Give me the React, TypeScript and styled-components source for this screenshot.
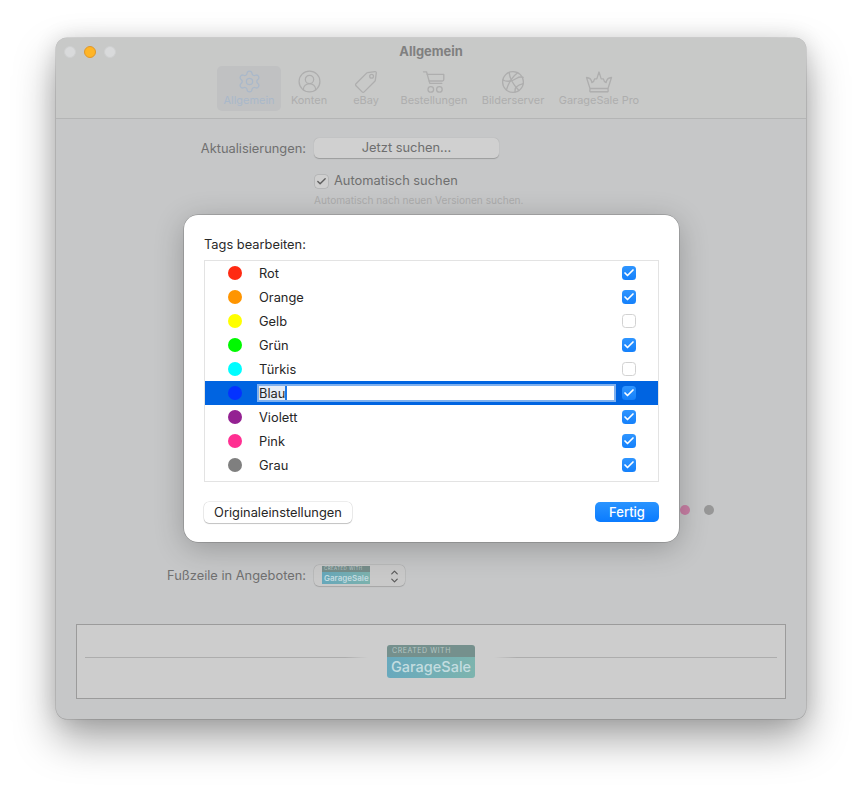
import React from "react";
import styled, { createGlobalStyle } from "styled-components";
import { Check, ChevronDown, ChevronUp, CircleUserRound, Settings } from "lucide-react";

const SYSTEM_FONT = `Inter, "Liberation Sans", sans-serif`;

const GlobalStyle = createGlobalStyle`
  html, body {
    margin: 0;
    padding: 0;
    background: #ffffff;
    font-family: ${SYSTEM_FONT};
    -webkit-font-smoothing: antialiased;
  }
`;

const tags = [
  { name: "Rot", color: "#ff2a12", checked: true },
  { name: "Orange", color: "#ff9500", checked: true },
  { name: "Gelb", color: "#ffff00", checked: false },
  { name: "Grün", color: "#00f900", checked: true },
  { name: "Türkis", color: "#00fdff", checked: false },
  { name: "Blau", color: "#0432ff", checked: true, editing: true },
  { name: "Violett", color: "#942192", checked: true },
  { name: "Pink", color: "#ff2f92", checked: true },
  { name: "Grau", color: "#7f7f7f", checked: true },
];

const TagIcon = () => (
  <svg width="24" height="24" viewBox="0 0 24 24" fill="none" stroke="currentColor" strokeWidth="1.3" strokeLinejoin="round">
    <path d="M13.6 2.6 21 1.6c.8-.1 1.4.5 1.3 1.3l-1 7.4c0 .4-.2.7-.5 1L10.2 21.9c-.6.6-1.5.6-2.1 0L2 15.8c-.6-.6-.6-1.5 0-2.1L12.6 3.1c.3-.3.6-.5 1-.5Z" />
    <circle cx="17.6" cy="6.2" r="1.9" />
  </svg>
);

const CartIcon = () => (
  <svg width="24" height="24" viewBox="0 0 24 24" fill="none" stroke="currentColor" strokeWidth="1.3" strokeLinecap="round" strokeLinejoin="round">
    <path d="M1.500 1.800h3l3.300 11.600h12" />
    <path d="M5.200 4.300h16.600v5.200c0 .9-.6 1.500-1.500 1.500H7.200" />
    <circle cx="8.800" cy="19.400" r="2.800" />
    <circle cx="17.400" cy="19.400" r="2.800" />
  </svg>
);

const GlobeBallIcon = () => (
  <svg width="24" height="24" viewBox="0 0 24 24" fill="none" stroke="currentColor" strokeWidth="1.3" strokeLinecap="round">
    <circle cx="12" cy="12" r="10.400" />
    <path d="M16.600 2.700C12.400 6 8 11 5.400 20" />
    <path d="M8.200 2.300c.2 5.600 4.200 12.500 9.700 18.200" />
    <path d="M1.800 10c4.500 2.200 9 1.600 14-1.800 2-1.300 4-1.600 6.400-.8" />
    <path d="M14 22c-.6-3 .8-6.500 8.200-8.400" />
  </svg>
);

const CrownIcon = () => (
  <svg width="28" height="24" viewBox="0 0 28 24" fill="none" stroke="currentColor" strokeWidth="1.300" strokeLinejoin="round">
    <path d="M5 18.500 1.500 7.500c3 .2 5 2 5.400 5.200 1.400-.5 2.300-1.700 2.700-3.800h2.200L14 2l2.200 6.900h2.200c.4 2.100 1.300 3.300 2.700 3.800.4-3.200 2.400-5 5.400-5.200L23 18.500Z" />
    <path d="M4.800 21.800h18.400" strokeWidth="1.500" />
    <path d="M5 18.500 4.800 21.800M23 18.500l.2 3.300" />
  </svg>
);

const Page = styled.div`
  width: 862px;
  height: 793px;
  padding: 38px 56px 74px;
  box-sizing: border-box;
  overflow: hidden;
`;

const Window = styled.div`
  position: relative;
  height: 681px;
  display: flex;
  flex-direction: column;
  border-radius: 11px;
  background: #c6c7c8;
  box-shadow: 0 0 0 0.5px rgba(0, 0, 0, 0.2), 0 20px 42px rgba(0, 0, 0, 0.36), 0 0 22px rgba(0, 0, 0, 0.12);
`;

const TitleBar = styled.header`
  height: 81px;
  flex: none;
  box-sizing: border-box;
  display: flex;
  flex-direction: column;
  border-bottom: 1px solid #b4b5b5;
  border-radius: 11px 11px 0 0;
  background: #c8c9c8;
`;

const TitleRow = styled.div`
  position: relative;
  height: 28px;
  flex: none;
  display: flex;
  align-items: flex-start;
  justify-content: center;
`;

const Lights = styled.div`
  position: absolute;
  left: 8px;
  top: 8px;
  display: flex;
  gap: 8px;
`;

const Light = styled.span<{ $active?: boolean }>`
  width: 12px;
  height: 12px;
  border-radius: 50%;
  box-sizing: border-box;
  background: ${(p) => (p.$active ? "#ffb527" : "#d9dadb")};
  border: 0.5px solid ${(p) => (p.$active ? "#e0982a" : "#cfd0d1")};
`;

const Title = styled.h1`
  margin: 6px 0 0;
  font-size: 12.900px;
  line-height: 16px;
  font-weight: 700;
  color: #808080;
`;

const Toolbar = styled.nav`
  display: flex;
  justify-content: center;
`;

const ToolItem = styled.div<{ $width: number; $selected?: boolean }>`
  width: ${(p) => p.$width}px;
  height: 45px;
  display: flex;
  flex-direction: column;
  align-items: center;
  justify-content: flex-start;
  padding-top: 3px;
  box-sizing: border-box;
  border-radius: 5px;
  background: ${(p) => (p.$selected ? "#c0c1c2" : "transparent")};
  color: ${(p) => (p.$selected ? "#a9b8ca" : "#aeaeae")};
`;

const ToolIcon = styled.div`
  height: 25px;
  display: flex;
  align-items: center;
  justify-content: center;
  color: inherit;
`;

const ToolLabel = styled.span`
  margin-top: 0;
  font-size: 10.950px;
  line-height: 13px;
  white-space: nowrap;
`;

const Content = styled.main`
  flex: 1;
  display: flex;
  flex-direction: column;
  padding: 19px 20px 20px;
  min-height: 0;
`;

const FormRow = styled.div`
  display: grid;
  grid-template-columns: 230px 1fr;
  column-gap: 8px;
  align-items: center;
`;

const FormLabel = styled.label`
  justify-self: end;
  font-size: 12.850px;
  color: #707070;
  white-space: nowrap;
`;

const PushButton = styled.div`
  width: 185px;
  height: 20px;
  border-radius: 5px;
  background: #d0d0d0;
  box-shadow: 0 0.5px 1px rgba(0, 0, 0, 0.22);
  font-size: 12.850px;
  line-height: 19px;
  text-align: center;
  color: #6e6e6e;
`;

const CheckRow = styled.div`
  grid-column: 2;
  display: flex;
  align-items: center;
  gap: 6px;
  margin-top: 14px;
  padding-left: 1px;
  font-size: 12.850px;
  line-height: 18px;
  color: #6f6f6f;
`;

const DimBox = styled.span`
  width: 13px;
  height: 13px;
  border-radius: 3px;
  background: #cfcfcf;
  box-shadow: 0 0 0 0.5px rgba(0, 0, 0, 0.16);
  display: flex;
  align-items: center;
  justify-content: center;
  color: #5e5e5e;
`;

const Hint = styled.div`
  grid-column: 2;
  margin-top: 3px;
  font-size: 10.100px;
  line-height: 14px;
  color: #acacac;
`;

const DotRow = styled.div`
  margin-top: 298px;
  margin-right: 72px;
  display: flex;
  justify-content: flex-end;
  gap: 14px;
`;

const Dot = styled.span<{ $color: string }>`
  width: 10px;
  height: 10px;
  border-radius: 50%;
  background: ${(p) => p.$color};
`;

const FooterRow = styled(FormRow)`
  margin-top: 50px;
`;

const PopupButton = styled.div`
  width: 91px;
  height: 21px;
  box-sizing: border-box;
  padding: 1px 5px 0 8px;
  border-radius: 5px;
  background: #c9c9c9;
  box-shadow: 0 0 0 0.5px rgba(0, 0, 0, 0.1), 0 0.5px 1px rgba(0, 0, 0, 0.12);
  display: flex;
  align-items: flex-start;
  justify-content: space-between;
  color: #5a5a5a;
`;

const Stepper = styled.span`
  display: flex;
  flex-direction: column;
  margin-top: 2px;
  svg {
    display: block;
    margin: -1.500px 0;
  }
`;

const MiniLogo = styled.div`
  width: 48px;
  height: 18px;
  display: flex;
  flex-direction: column;
  font-size: 4.500px;
  color: #bdcaca;
`;

const MiniTop = styled.span`
  height: 6px;
  line-height: 6px;
  padding-left: 2px;
  background: #768d8a;
  letter-spacing: 0.4px;
  white-space: nowrap;
`;

const MiniBottom = styled.span`
  flex: 1;
  padding-left: 2px;
  font-size: 8px;
  line-height: 12px;
  font-weight: 600;
  color: #c3dbe0;
  background: linear-gradient(90deg, #66a7ba, #7cb2ad);
`;

const PreviewBox = styled.section`
  margin-top: auto;
  height: 75px;
  box-sizing: border-box;
  border: 1px solid #9b9b9b;
  background: #cdcdcd;
  display: flex;
  align-items: center;
  padding: 0 8px;
  gap: 19px;
`;

const Rule = styled.span<{ $fade: "left" | "right" }>`
  flex: 1;
  height: 1px;
  margin-bottom: 9px;
  background: linear-gradient(
    ${(p) => (p.$fade === "right" ? "90deg" : "270deg")},
    #adadad 92%,
    #cdcdcd 100%
  );
`;

const Logo = styled.div`
  width: 88px;
  height: 33px;
  flex: none;
  border-radius: 3px;
  overflow: hidden;
  display: flex;
  flex-direction: column;
`;

const LogoTop = styled.span`
  height: 12px;
  line-height: 12px;
  padding-left: 5px;
  font-size: 7px;
  letter-spacing: 0.55px;
  color: #b6c6c4;
  background: #75908d;
  white-space: nowrap;
`;

const LogoBottom = styled.span`
  flex: 1;
  padding-left: 4px;
  font-size: 14.500px;
  line-height: 20px;
  font-weight: 500;
  color: #c4dde0;
  background: linear-gradient(90deg, #68a9bd, #7db4ae);
  white-space: nowrap;
`;

const Sheet = styled.div`
  position: absolute;
  left: 128px;
  top: 177px;
  width: 495px;
  height: 327px;
  box-sizing: border-box;
  padding: 20px 20px 0;
  border-radius: 14px;
  background: #ffffff;
  display: flex;
  flex-direction: column;
  box-shadow: 0 0 0 0.5px rgba(0, 0, 0, 0.28), 0 6px 30px rgba(0, 0, 0, 0.24);
`;

const SheetTitle = styled.div`
  padding-top: 1px;
  font-size: 12.850px;
  line-height: 18px;
  color: #2a2a2a;
`;

const TagList = styled.div`
  flex: none;
  margin-top: 6px;
  height: 222px;
  box-sizing: border-box;
  border: 1px solid #e3e3e3;
`;

const TagRow = styled.div<{ $selected?: boolean }>`
  height: 24px;
  display: flex;
  align-items: center;
  padding: 0 22px 0 23px;
  background: ${(p) => (p.$selected ? "#0064e1" : "transparent")};
`;

const Swatch = styled.span<{ $color: string }>`
  width: 14px;
  height: 14px;
  flex: none;
  border-radius: 50%;
  background: ${(p) => p.$color};
`;

const TagName = styled.span`
  margin-left: 17px;
  padding-top: 2px;
  flex: 1;
  font-size: 12.850px;
  line-height: 18px;
  color: #262626;
`;

const EditField = styled.div`
  margin-left: 15px;
  margin-right: 6px;
  flex: 1;
  height: 18px;
  box-sizing: border-box;
  display: flex;
  border: 2px solid #7fb0ee;
  background: #ffffff;
  font-size: 12.850px;
  line-height: 15px;
  color: #262626;
`;

const EditSelection = styled.span`
  width: 26px;
  background: #e6edf7;
  border-right: 2px solid #1c78e8;
  overflow: hidden;
`;

const TagCheck = styled.span<{ $checked: boolean }>`
  width: 14px;
  height: 14px;
  flex: none;
  box-sizing: border-box;
  border-radius: 3.500px;
  display: flex;
  align-items: center;
  justify-content: center;
  color: #ffffff;
  background: ${(p) => (p.$checked ? "linear-gradient(#2f95ff, #1480fb)" : "#ffffff")};
  border: ${(p) => (p.$checked ? "none" : "1px solid #d2d2d2")};
`;

const SheetFooter = styled.div`
  flex: none;
  margin-top: 20px;
  display: flex;
  justify-content: space-between;
  align-items: flex-start;
`;

const DefaultButton = styled.button`
  width: 148px;
  height: 21px;
  padding: 0;
  border: none;
  border-radius: 5px;
  background: #ffffff;
  box-shadow: 0 0 0 0.5px rgba(0, 0, 0, 0.14), 0 1px 1px rgba(0, 0, 0, 0.18);
  font-family: inherit;
  font-size: 12.850px;
  line-height: 19px;
  color: #262626;
`;

const DoneButton = styled.button`
  width: 64px;
  height: 20px;
  padding: 0;
  border: none;
  border-radius: 5px;
  background: linear-gradient(#2a94ff, #0a7bff);
  font-family: inherit;
  font-size: 13px;
  font-weight: 500;
  line-height: 20px;
  color: #ffffff;
`;

const App: React.FC = () => {
  return (
    <Page>
      <GlobalStyle />
      <Window>
        <TitleBar>
          <TitleRow>
            <Lights>
              <Light />
              <Light $active />
              <Light />
            </Lights>
            <Title>Allgemein</Title>
          </TitleRow>
          <Toolbar>
            <ToolItem $width={64} $selected>
              <ToolIcon>
                <Settings size={25} strokeWidth={1.2} />
              </ToolIcon>
              <ToolLabel>Allgemein</ToolLabel>
            </ToolItem>
            <ToolItem $width={56}>
              <ToolIcon>
                <CircleUserRound size={25} strokeWidth={1.2} />
              </ToolIcon>
              <ToolLabel>Konten</ToolLabel>
            </ToolItem>
            <ToolItem $width={58}>
              <ToolIcon>
                <TagIcon />
              </ToolIcon>
              <ToolLabel>eBay</ToolLabel>
            </ToolItem>
            <ToolItem $width={78}>
              <ToolIcon>
                <CartIcon />
              </ToolIcon>
              <ToolLabel>Bestellungen</ToolLabel>
            </ToolItem>
            <ToolItem $width={80}>
              <ToolIcon>
                <GlobeBallIcon />
              </ToolIcon>
              <ToolLabel>Bilderserver</ToolLabel>
            </ToolItem>
            <ToolItem $width={92}>
              <ToolIcon>
                <CrownIcon />
              </ToolIcon>
              <ToolLabel>GarageSale Pro</ToolLabel>
            </ToolItem>
          </Toolbar>
        </TitleBar>
        <Content>
          <FormRow>
            <FormLabel>Aktualisierungen:</FormLabel>
            <PushButton>Jetzt suchen...</PushButton>
            <CheckRow>
              <DimBox>
                <Check size={11} strokeWidth={3} />
              </DimBox>
              Automatisch suchen
            </CheckRow>
            <Hint>Automatisch nach neuen Versionen suchen.</Hint>
          </FormRow>
          <DotRow>
            <Dot $color="#c87fa4" />
            <Dot $color="#979797" />
          </DotRow>
          <FooterRow>
            <FormLabel>Fußzeile in Angeboten:</FormLabel>
            <PopupButton>
              <MiniLogo>
                <MiniTop>CREATED WITH</MiniTop>
                <MiniBottom>GarageSale</MiniBottom>
              </MiniLogo>
              <Stepper>
                <ChevronUp size={11} strokeWidth={2.6} />
                <ChevronDown size={11} strokeWidth={2.6} />
              </Stepper>
            </PopupButton>
          </FooterRow>
          <PreviewBox>
            <Rule $fade="right" />
            <Logo>
              <LogoTop>CREATED WITH</LogoTop>
              <LogoBottom>GarageSale</LogoBottom>
            </Logo>
            <Rule $fade="left" />
          </PreviewBox>
        </Content>
        <Sheet>
          <SheetTitle>Tags bearbeiten:</SheetTitle>
          <TagList>
            {tags.map((tag) => (
              <TagRow key={tag.name} $selected={tag.editing}>
                <Swatch $color={tag.color} />
                {tag.editing ? (
                  <EditField>
                    <EditSelection>{tag.name}</EditSelection>
                  </EditField>
                ) : (
                  <TagName>{tag.name}</TagName>
                )}
                <TagCheck $checked={tag.checked}>
                  {tag.checked && <Check size={12} strokeWidth={3.4} />}
                </TagCheck>
              </TagRow>
            ))}
          </TagList>
          <SheetFooter>
            <DefaultButton>Originaleinstellungen</DefaultButton>
            <DoneButton>Fertig</DoneButton>
          </SheetFooter>
        </Sheet>
      </Window>
    </Page>
  );
};

export default App;
